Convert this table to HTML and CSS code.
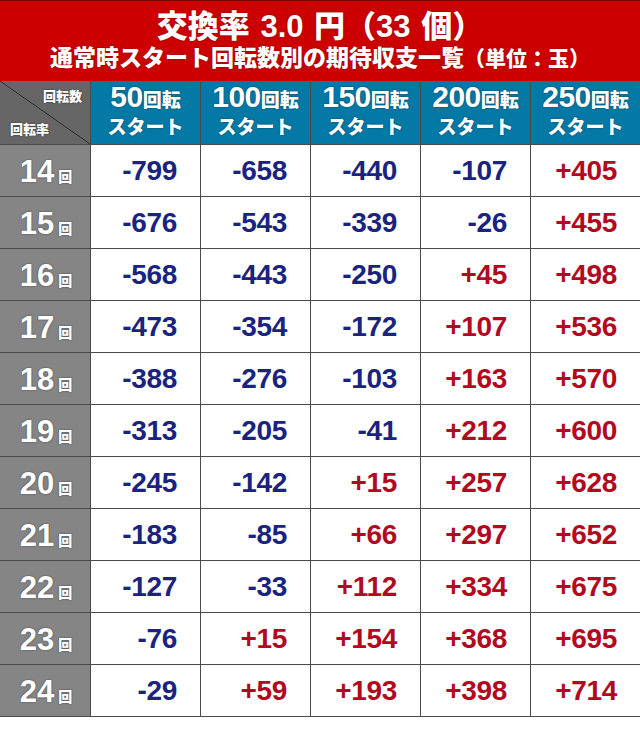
FILE: index.html
```html
<!DOCTYPE html>
<html lang="ja">
<head>
<meta charset="utf-8">
<link rel="stylesheet" href="styles.css">
</head>
<body>
<div class="page">
  <div class="title">
    <div class="t1">交換率 3.0 円（33 個）</div>
    <div class="t2">通常時スタート回転数別の期待収支一覧<span class="unit">（単位：玉）</span></div>
  </div>
  <div class="grid">
    <div class="corner"><span class="c-top">回転数</span><span class="c-bot">回転率</span></div>
    <div class="head"><div><span class="hn">50</span>回転</div><div>スタート</div></div>
    <div class="head"><div><span class="hn">100</span>回転</div><div>スタート</div></div>
    <div class="head"><div><span class="hn">150</span>回転</div><div>スタート</div></div>
    <div class="head"><div><span class="hn">200</span>回転</div><div>スタート</div></div>
    <div class="head"><div><span class="hn">250</span>回転</div><div>スタート</div></div>

    <div class="rl">14<span class="kai">回</span></div>
    <div class="n neg">-799</div><div class="n neg">-658</div><div class="n neg">-440</div><div class="n neg">-107</div><div class="n pos">+405</div>

    <div class="rl">15<span class="kai">回</span></div>
    <div class="n neg">-676</div><div class="n neg">-543</div><div class="n neg">-339</div><div class="n neg">-26</div><div class="n pos">+455</div>

    <div class="rl">16<span class="kai">回</span></div>
    <div class="n neg">-568</div><div class="n neg">-443</div><div class="n neg">-250</div><div class="n pos">+45</div><div class="n pos">+498</div>

    <div class="rl">17<span class="kai">回</span></div>
    <div class="n neg">-473</div><div class="n neg">-354</div><div class="n neg">-172</div><div class="n pos">+107</div><div class="n pos">+536</div>

    <div class="rl">18<span class="kai">回</span></div>
    <div class="n neg">-388</div><div class="n neg">-276</div><div class="n neg">-103</div><div class="n pos">+163</div><div class="n pos">+570</div>

    <div class="rl">19<span class="kai">回</span></div>
    <div class="n neg">-313</div><div class="n neg">-205</div><div class="n neg">-41</div><div class="n pos">+212</div><div class="n pos">+600</div>

    <div class="rl">20<span class="kai">回</span></div>
    <div class="n neg">-245</div><div class="n neg">-142</div><div class="n pos">+15</div><div class="n pos">+257</div><div class="n pos">+628</div>

    <div class="rl">21<span class="kai">回</span></div>
    <div class="n neg">-183</div><div class="n neg">-85</div><div class="n pos">+66</div><div class="n pos">+297</div><div class="n pos">+652</div>

    <div class="rl">22<span class="kai">回</span></div>
    <div class="n neg">-127</div><div class="n neg">-33</div><div class="n pos">+112</div><div class="n pos">+334</div><div class="n pos">+675</div>

    <div class="rl">23<span class="kai">回</span></div>
    <div class="n neg">-76</div><div class="n pos">+15</div><div class="n pos">+154</div><div class="n pos">+368</div><div class="n pos">+695</div>

    <div class="rl">24<span class="kai">回</span></div>
    <div class="n neg">-29</div><div class="n pos">+59</div><div class="n pos">+193</div><div class="n pos">+398</div><div class="n pos">+714</div>
  </div>
</div>
</body>
</html>
```
FILE: styles.css
```css
* { box-sizing: border-box; }
html, body { margin: 0; padding: 0; background: #fff; }
body {
  font-family: "Liberation Sans", "Noto Sans CJK JP", sans-serif;
  font-weight: bold;
}
.page { width: 640px; }

.title {
  height: 81px;
  background: #cc0000;
  border-top: 1px solid #7a0000;
  color: #fff;
  text-align: center;
  text-shadow: 0 0 2px rgba(80,0,0,0.6);
  padding-top: 9px;
  font-weight: 900;
}
.t1 {
  font-size: 31px;
  line-height: 34px;
  word-spacing: 2px;
}
.t2 {
  font-size: 23px;
  line-height: 28px;
  margin-top: 0;
}
.unit { font-size: 21px; }

.grid {
  display: grid;
  grid-template-columns: 90px repeat(5, 109px);
  grid-template-rows: 63px repeat(11, 51px);
  gap: 1px;
  background: #4a4a4a;
  border-bottom: 1px solid #4a4a4a;
}

.corner {
  position: relative;
  background: #666 linear-gradient(to top right, transparent calc(50% - 0.7px), #222 50%, transparent calc(50% + 0.7px));
  color: #fff;
  font-size: 13px;
  font-weight: 900;
  text-shadow: 0 0 2px rgba(0,0,0,0.6);
}
.c-top { position: absolute; right: 8px; top: 5px; }
.c-bot { position: absolute; left: 10px; bottom: 6px; }

.head {
  background: #0479a6;
  color: #fff;
  display: flex;
  flex-direction: column;
  align-items: center;
  justify-content: center;
  font-size: 19px;
  line-height: 27px;
  font-weight: 900;
  text-shadow: 0 0 2px rgba(0,40,60,0.7);
  padding-bottom: 2px;
}
.hn { font-size: 30px; letter-spacing: -0.5px; font-weight: bold; }

.rl {
  background: #858585;
  color: #fff;
  display: flex;
  align-items: baseline;
  justify-content: center;
  padding-top: 9px;
  font-size: 31px;
  line-height: 36px;
  text-shadow: 0 0 2px rgba(0,0,0,0.5);
  padding-left: 2px;
}
.kai { font-size: 14px; margin-left: 4px; font-weight: 900; }

.n {
  background: #fff;
  display: flex;
  align-items: center;
  justify-content: flex-end;
  padding-right: 23px;
  font-size: 28px;
  letter-spacing: -0.3px;
}
.neg { color: #1a237e; }
.pos { color: #b3091f; }
```
